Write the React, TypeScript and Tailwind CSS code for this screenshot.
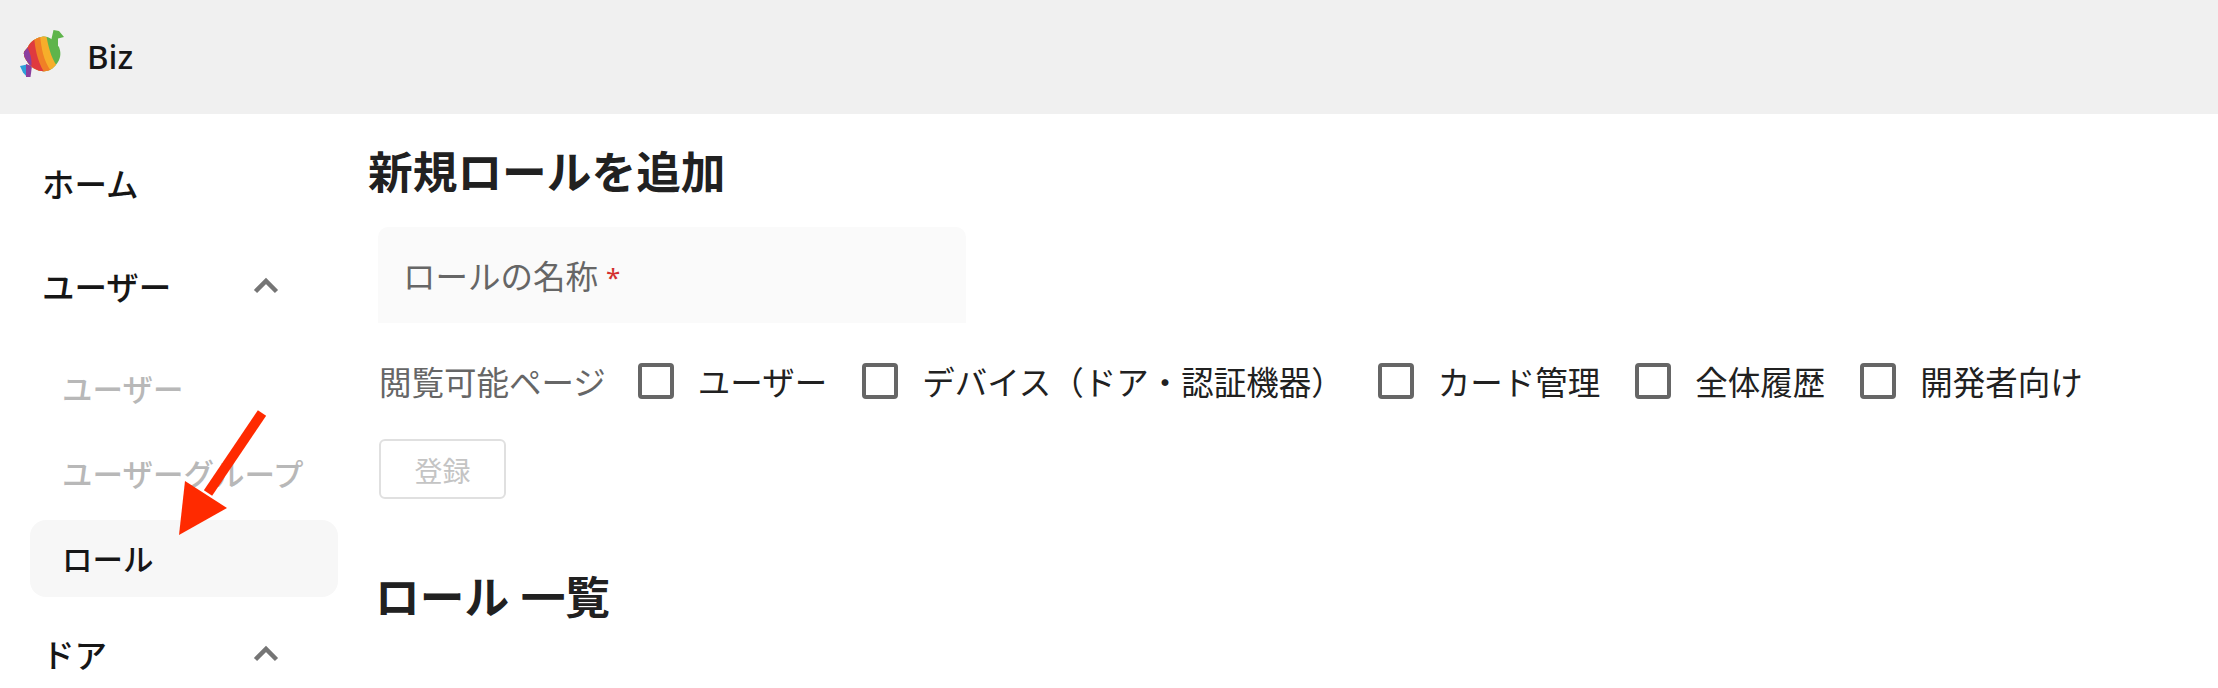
const jp = { fontFamily: '"Noto Sans", "Noto Sans CJK JP", sans-serif' };

function CandyLogo() {
  return (
    <svg width="55" height="58" viewBox="0 0 55 58" className="mb-[8px] shrink-0">
      <defs>
        <clipPath id="candy">
          <path d="M13 23C15 18 20 14 28 12.5C34 12 40 17 44 23C46 28 46 33 43 38C40 43 35 47 31 47C25 48 19 45 16 42C12 38 8 32 9 28C10 26 12 25 13 23Z" />
        </clipPath>
      </defs>
      <path d="M36 17L38.5 6L44 7L49 13L43 14.5L43 23Z" fill="#5eb44b" />
      <path d="M5 42L12 40.5L12 53L8 48.5Z" fill="#2d9fd9" />
      <path d="M11 40L17 42L15.5 53L11 53Z" fill="#8b3f9f" />
      <g clipPath="url(#candy)">
        <rect width="55" height="58" fill="#5eb44b" />
        <path d="M31 10C33 20 35 32 42 42L30 52L0 52L0 10Z" fill="#f6ae2a" />
        <path d="M25 10C26 22 28 36 36 47L30 52L0 52L0 10Z" fill="#f08026" />
        <path d="M19 12C20 24 22 36 29 48L0 52L0 12Z" fill="#df3a3f" />
        <path d="M12 22C14 28 18 34 16 44L0 46L0 22Z" fill="#8b3f9f" />
      </g>
    </svg>
  );
}

function ChevronUp() {
  return (
    <svg width="26" height="18" viewBox="0 0 26 18" className="mb-[4px] shrink-0">
      <path d="M2.5 14.5L13 4L23.5 14.5" fill="none" stroke="#757575" strokeWidth="4.5" />
    </svg>
  );
}

function NavGroup({ label }: { label: string }) {
  return (
    <div className="flex h-[56px] items-center justify-between pl-[42px] pr-[89px] text-[32.5px] font-medium text-[#161616]">
      <span>{label}</span>
      <ChevronUp />
    </div>
  );
}

function Check({ label, gap }: { label: string; gap: string }) {
  return (
    <label className={`flex items-center gap-[24px] ${gap}`}>
      <span className="h-[36px] w-[36px] rounded-[4px] border-[4px] border-[#666666] bg-white" />
      <span className="pt-[4px]">{label}</span>
    </label>
  );
}

export default function App() {
  return (
    <div className="relative h-[688px] overflow-hidden bg-white" style={jp}>
      <header className="flex h-[114px] items-center gap-[17px] bg-[#f0f0f0] pl-[15px]">
        <CandyLogo />
        <span className="text-[33px] font-medium text-[#161616]">Biz</span>
      </header>

      <div className="flex">
        <nav className="w-[368px] shrink-0">
          <div className="mt-[43px] flex h-[56px] items-center pl-[42px] text-[32.5px] font-medium text-[#161616]">
            ホーム
          </div>
          <div className="mt-[47px]">
            <NavGroup label="ユーザー" />
          </div>
          <div className="mt-[46px] flex h-[56px] items-center pl-[62px] text-[30.5px] font-medium text-[#b8b8b8]">
            ユーザー
          </div>
          <div className="mt-[29px] flex h-[56px] items-center pl-[62px] text-[30.5px] font-medium text-[#b8b8b8] whitespace-nowrap">
            ユーザーグループ
          </div>
          <div className="mt-[17px] ml-[30px] mr-[30px] flex h-[77px] items-center rounded-[16px] bg-[#f7f7f7] pl-[32px] pt-[2px] text-[30.5px] font-medium text-[#161616]">
            ロール
          </div>
          <div className="mt-[31px]">
            <NavGroup label="ドア" />
          </div>
        </nav>

        <main className="min-w-0 flex-1">
          <h1 className="mt-[30px] text-[44.7px] leading-[56px] font-bold text-[#212121]">新規ロールを追加</h1>
          <div className="mt-[27px] ml-[10px] flex h-[96px] w-[588px] items-center rounded-t-[10px] bg-[#fafafa] pl-[25px] pt-[5px] text-[32.5px] text-[#666666]">
            ロールの名称<span className="ml-[8px] text-[26px] text-[#d32f2f]">*</span>
          </div>
          <div className="mt-[40px] ml-[11px] flex h-[36px] items-center text-[32.5px] whitespace-nowrap text-[#212121]">
            <span className="mr-[32px] pt-[4px] text-[#666666]">閲覧可能ページ</span>
            <Check label="ユーザー" gap="mr-[35px]" />
            <Check label="デバイス（ドア・認証機器）" gap="mr-[34px]" />
            <Check label="カード管理" gap="mr-[35px]" />
            <Check label="全体履歴" gap="mr-[35px]" />
            <Check label="開発者向け" gap="" />
          </div>
          <button className="mt-[40px] ml-[11px] h-[60px] w-[127px] rounded-[6px] border-2 border-[#e0e0e0] bg-white pt-[4px] text-[28px] text-[#c4c4c4]">
            登録
          </button>
          <h2 className="mt-[70px] ml-[7px] text-[44.7px] leading-[56px] font-bold text-[#212121]">ロール 一覧</h2>
        </main>
      </div>

      {/* 注釈の赤い矢印 */}
      <svg width="100" height="140" viewBox="0 0 100 140" className="pointer-events-none absolute left-[170px] top-[405px]">
        <path d="M92 8L38 88" stroke="#ff2a00" strokeWidth="10" fill="none" />
        <path d="M9 130L15 76L57 103Z" fill="#ff2a00" />
      </svg>
    </div>
  );
}
